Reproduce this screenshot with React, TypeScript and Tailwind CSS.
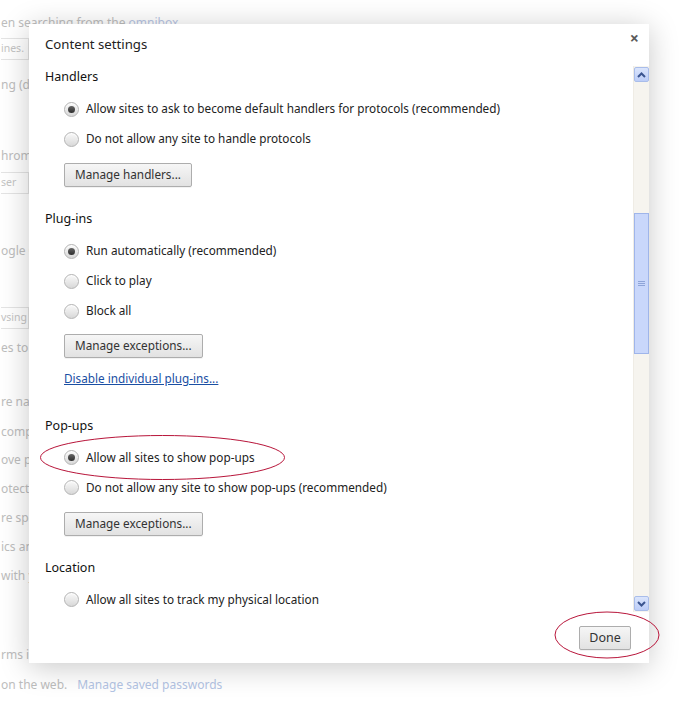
import React from "react";

const font = { fontFamily: '"Noto Sans", "Open Sans", sans-serif' };

function Radio({ checked }: { checked?: boolean }) {
  return (
    <span className="relative inline-flex h-[15px] w-[15px] shrink-0 items-center justify-center rounded-full border border-[#b4b4b4] bg-gradient-to-b from-[#fafafa] to-[#d8d8d8] shadow-[inset_0_1px_1px_rgba(255,255,255,0.9)]">
      {checked && (
        <span className="h-[7px] w-[7px] rounded-full bg-gradient-to-b from-[#666] to-[#2e2e2e]" />
      )}
    </span>
  );
}

function RadioRow({ checked, label }: { checked?: boolean; label: string }) {
  return (
    <div className="flex h-[30px] items-center pl-[19px]">
      <Radio checked={checked} />
      <span className="ml-[7px] text-[11.75px] text-[#222]">{label}</span>
    </div>
  );
}

function Btn({ label, className = "" }: { label: string; className?: string }) {
  return (
    <div
      className={
        "flex h-[24px] items-center rounded-[2px] border border-[#adadad] bg-gradient-to-b from-[#f6f6f6] to-[#e2e2e2] px-[10px] text-[11.75px] text-[#333] shadow-[0_1px_0_rgba(0,0,0,0.05)] " +
        className
      }
    >
      {label}
    </div>
  );
}

function Heading({ label, className = "" }: { label: string; className?: string }) {
  return (
    <div className={"flex h-[20px] items-center pt-[3px] text-[12.5px] text-[#111] " + className}>{label}</div>
  );
}

function Background() {
  const t = "h-[20px] leading-[20px] text-[12px] text-[#bdbdbd] whitespace-nowrap";
  const box = "flex h-[22px] w-[28px] items-center border border-l-0 border-[#e4e4e4] text-[10.5px] text-[#c4c4c4] whitespace-nowrap";
  return (
    <div className="flex w-[683px] flex-col pl-[1px]">
      <div className={"mt-[13px] " + t}>
        en searching from the <span className="text-[#b8c6e4]">omnibox</span>
      </div>
      <div className={"mt-[5px] " + box}>ines.</div>
      <div className={"mt-[15px] " + t}>ng (d</div>
      <div className={"mt-[51px] " + t}>hrom</div>
      <div className={"mt-[6px] " + box}>ser</div>
      <div className={"mt-[47px] " + t}>ogle C</div>
      <div className={"mt-[46px] " + box}>vsing</div>
      <div className={"mt-[9px] " + t}>es to</div>
      <div className={"mt-[34px] " + t}>re nav</div>
      <div className={"mt-[10px] " + t}>comp</div>
      <div className={"mt-[8px] " + t}>ove p</div>
      <div className={"mt-[9px] " + t}>otecti</div>
      <div className={"mt-[9px] " + t}>re spe</div>
      <div className={"mt-[9px] " + t}>ics an</div>
      <div className={"mt-[9px] " + t}>with y</div>
      <div className={"mt-[59px] " + t}>rms in</div>
      <div className={"mt-[10px] " + t}>
        on the web.<span className="ml-[10px] text-[#b3c4e4]">Manage saved passwords</span>
      </div>
    </div>
  );
}

function Scrollbar() {
  return (
    <div className="flex w-[16px] shrink-0 flex-col bg-[#f6f4ef] border-l border-[#efece5]">
      <div className="mt-[1px] flex h-[15px] w-[15px] items-center justify-center rounded-[2px] border border-[#a9bdea] bg-gradient-to-b from-[#dbe5fc] to-[#bccdf8]">
        <svg width="9" height="6" viewBox="0 0 9 6">
          <path d="M1 5 L4.5 1.5 L8 5" fill="none" stroke="#3b5590" strokeWidth="2" />
        </svg>
      </div>
      <div className="mt-[131px] flex h-[141px] w-[15px] items-center justify-center border border-[#9fb5ea] bg-[#c9d7fb]">
        <svg width="7" height="7" viewBox="0 0 7 7">
          <path d="M0 1.5 H7 M0 3.5 H7 M0 5.5 H7" stroke="#8ea4d8" strokeWidth="1" />
        </svg>
      </div>
      <div className="flex-1" />
      <div className="mb-[1px] flex h-[15px] w-[15px] items-center justify-center rounded-[2px] border border-[#a9bdea] bg-gradient-to-b from-[#dbe5fc] to-[#bccdf8]">
        <svg width="9" height="6" viewBox="0 0 9 6">
          <path d="M1 1 L4.5 4.5 L8 1" fill="none" stroke="#3b5590" strokeWidth="2" />
        </svg>
      </div>
    </div>
  );
}

function Dialog() {
  return (
    <div className="absolute left-[29px] top-[24px] flex h-[639px] w-[620px] flex-col bg-white shadow-[0_4px_28px_rgba(0,0,0,0.22)]">
      <div className="flex h-[42px] items-start">
        <div className="mt-[11px] pl-[16px] text-[13.2px] text-[#222]">Content settings</div>
        <div className="flex-1" />
        <div className="mr-[10px] mt-[2px] text-[16px] font-bold text-[#5a5a5a]">×</div>
      </div>
      <div className="flex h-[546px] overflow-hidden">
        <div className="flex flex-1 flex-col pl-[16px]">
          <Heading label="Handlers" />
          <div className="mt-[8px]">
            <RadioRow checked label="Allow sites to ask to become default handlers for protocols (recommended)" />
            <RadioRow label="Do not allow any site to handle protocols" />
          </div>
          <div className="mt-[9px] flex pl-[19px]">
            <Btn label="Manage handlers..." />
          </div>
          <Heading label="Plug-ins" className="mt-[21px]" />
          <div className="mt-[8px]">
            <RadioRow checked label="Run automatically (recommended)" />
            <RadioRow label="Click to play" />
            <RadioRow label="Block all" />
          </div>
          <div className="mt-[8px] flex pl-[19px]">
            <Btn label="Manage exceptions..." />
          </div>
          <div className="mt-[12px] flex h-[20px] items-center pl-[19px]">
            <span className="text-[11.75px] text-[#1a4fa3] underline">Disable individual plug-ins...</span>
          </div>
          <Heading label="Pop-ups" className="mt-[27px]" />
          <div className="mt-[8px]">
            <RadioRow checked label="Allow all sites to show pop-ups" />
            <RadioRow label="Do not allow any site to show pop-ups (recommended)" />
          </div>
          <div className="mt-[9px] flex pl-[19px]">
            <Btn label="Manage exceptions..." />
          </div>
          <Heading label="Location" className="mt-[21px]" />
          <div className="mt-[8px]">
            <RadioRow label="Allow all sites to track my physical location" />
          </div>
        </div>
        <Scrollbar />
      </div>
      <div className="flex flex-1 items-start justify-end pr-[18px] pt-[14px]">
        <Btn label="Done" className="h-[24px] w-[52px] justify-center px-0 text-[12.5px]" />
      </div>
    </div>
  );
}

export default function App() {
  return (
    <div className="relative h-[717px] w-[683px] overflow-hidden bg-white" style={font}>
      <Background />
      <Dialog />
      <svg className="pointer-events-none absolute inset-0" width="683" height="717">
        <ellipse cx="162.5" cy="457.5" rx="122" ry="22" fill="none" stroke="#b8153a" strokeWidth="1" />
        <ellipse cx="607" cy="635" rx="52" ry="23" fill="none" stroke="#b8153a" strokeWidth="1" />
      </svg>
    </div>
  );
}
